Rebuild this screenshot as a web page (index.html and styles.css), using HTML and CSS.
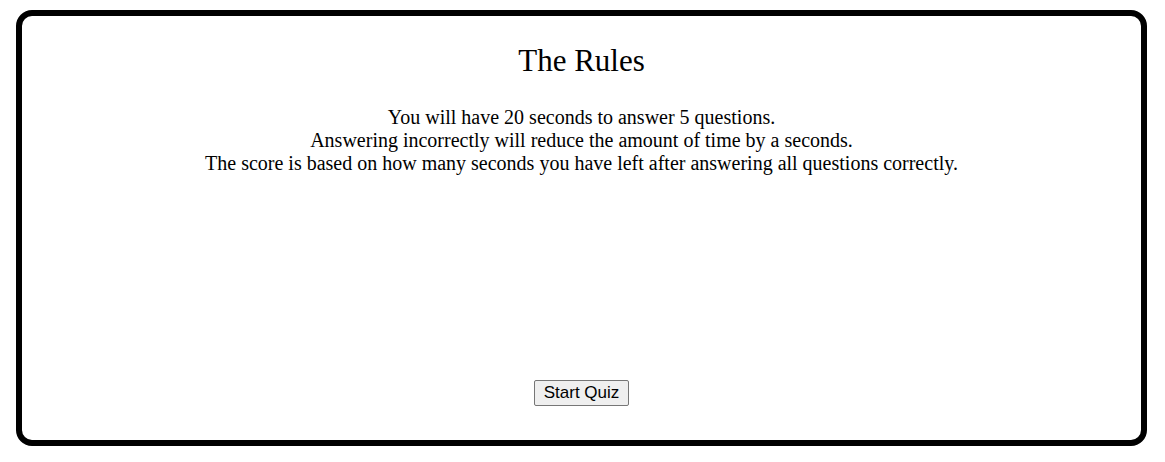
FILE: index.html
```html
<!DOCTYPE html>
<html>
<head>
<meta charset="utf-8">
<link rel="stylesheet" href="styles.css">
</head>
<body>
<div class="card">
  <h1 class="title">The Rules</h1>
  <p class="rules">You will have 20 seconds to answer 5 questions.<br>Answering incorrectly will reduce the amount of time by a seconds.<br>The score is based on how many seconds you have left after answering all questions correctly.</p>
  <div class="actions"><button class="start">Start Quiz</button></div>
</div>
</body>
</html>
```
FILE: styles.css
```css
html, body {
  margin: 0;
  padding: 0;
  background: #fff;
}
body {
  font-family: "Liberation Serif", "Times New Roman", serif;
  color: #000;
}
.card {
  box-sizing: border-box;
  margin: 10px 18px 0 16px;
  height: 436px;
  border: 6px solid #000;
  border-radius: 16px;
  display: flex;
  flex-direction: column;
  align-items: center;
  text-align: center;
}
.title {
  font-size: 31px;
  font-weight: normal;
  margin: 28px 0 0;
  line-height: 34px;
}
.rules {
  font-size: 20px;
  line-height: 23px;
  margin: 28px 0 0;
}
.actions {
  margin-top: auto;
  padding-bottom: 34px;
}
.start {
  font-family: "Liberation Sans", Arial, sans-serif;
  font-size: 17px;
  padding: 0 9px;
  background: #efefef;
  border: 1px solid #767676;
  border-radius: 2px;
  color: #000;
  height: 26px;
}
```
